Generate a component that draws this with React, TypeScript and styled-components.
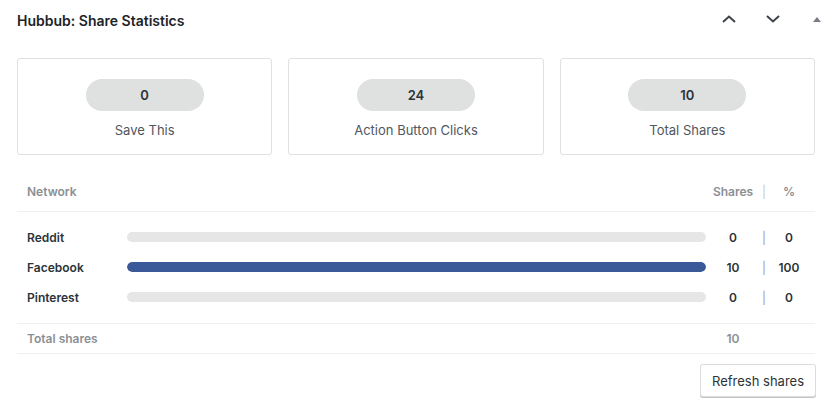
import styled, { createGlobalStyle } from 'styled-components';

const GlobalStyle = createGlobalStyle`
  html, body {
    margin: 0;
    background: #ffffff;
    font-family: Inter, "Noto Sans", "Liberation Sans", sans-serif;
    color: #1d2327;
  }
`;

interface Stat {
  value: number;
  label: string;
}

interface NetworkRow {
  name: string;
  shares: number;
  percent: number;
  color: string;
}

const stats: Stat[] = [
  { value: 0, label: 'Save This' },
  { value: 24, label: 'Action Button Clicks' },
  { value: 10, label: 'Total Shares' },
];

const networks: NetworkRow[] = [
  { name: 'Reddit', shares: 0, percent: 0, color: '#cb4a26' },
  { name: 'Facebook', shares: 10, percent: 100, color: '#3b5998' },
  { name: 'Pinterest', shares: 0, percent: 0, color: '#bd081c' },
];

export default function App() {
  const total = networks.reduce((sum, n) => sum + n.shares, 0);

  return (
    <>
      <GlobalStyle />
      <Panel>
        <Header>
          <Title>Hubbub: Share Statistics</Title>
          <Handles>
            <HandleButton aria-label="Move up">
              <svg width="14" height="8" viewBox="0 0 14 8">
                <path d="M1 7L7 1.5L13 7" fill="none" stroke="#3c434a" strokeWidth="2" />
              </svg>
            </HandleButton>
            <HandleButton aria-label="Move down">
              <svg width="14" height="8" viewBox="0 0 14 8">
                <path d="M1 1L7 6.5L13 1" fill="none" stroke="#3c434a" strokeWidth="2" />
              </svg>
            </HandleButton>
            <HandleButton aria-label="Toggle panel">
              <svg width="8" height="5" viewBox="0 0 8 5">
                <path d="M4 0L8 5H0Z" fill="#787c82" />
              </svg>
            </HandleButton>
          </Handles>
        </Header>

        <Body>
          <Cards>
            {stats.map((s) => (
              <Card key={s.label}>
                <Pill>{s.value}</Pill>
                <CardLabel>{s.label}</CardLabel>
              </Card>
            ))}
          </Cards>

          <Table>
            <HeadRow>
              <Wide>Network</Wide>
              <Cell>Shares</Cell>
              <Pipe $muted>|</Pipe>
              <Cell>%</Cell>
            </HeadRow>
            <Rows>
              {networks.map((n) => (
                <Row key={n.name}>
                  <Name>{n.name}</Name>
                  <Track>
                    <Fill style={{ width: `${n.percent}%`, background: n.color }} />
                  </Track>
                  <Cell>{n.shares}</Cell>
                  <Pipe>|</Pipe>
                  <Cell>{n.percent}</Cell>
                </Row>
              ))}
            </Rows>
            <FootRow>
              <Wide>Total shares</Wide>
              <Cell>{total}</Cell>
            </FootRow>
          </Table>

          <Actions>
            <Button>Refresh shares</Button>
          </Actions>
        </Body>
      </Panel>
    </>
  );
}

const Panel = styled.div`
  width: 839px;
  height: 418px;
  background: #ffffff;
`;

const Header = styled.div`
  display: flex;
  align-items: center;
  justify-content: space-between;
  height: 40px;
  padding-left: 17px;
`;

const Title = styled.h2`
  margin: 0;
  font-size: 14px;
  font-weight: 600;
  color: #1d2327;
`;

const Handles = styled.div`
  display: flex;
  align-items: center;
  margin-top: -2px;
`;

const HandleButton = styled.button`
  display: grid;
  place-content: center;
  width: 44px;
  height: 36px;
  padding: 0;
  border: 0;
  background: transparent;
`;

const Body = styled.div`
  padding: 18px 24px 0 17px;
`;

const Cards = styled.div`
  display: grid;
  grid-template-columns: repeat(3, 1fr);
  gap: 16px;
`;

const Card = styled.div`
  display: flex;
  flex-direction: column;
  align-items: center;
  padding: 20px 16px 15px;
  border: 1px solid #e0e0e0;
  border-radius: 3px;
`;

const Pill = styled.div`
  display: grid;
  place-content: center;
  width: 118px;
  height: 32px;
  margin-bottom: 10px;
  border-radius: 16px;
  background: #dfe0e0;
  font-size: 13px;
  font-weight: 600;
  color: #2c3338;
`;

const CardLabel = styled.div`
  font-size: 13px;
  line-height: 18px;
  color: #50575e;
`;

const Table = styled.div`
  margin-top: 16px;
`;

const gridColumns = `
  display: grid;
  grid-template-columns: 100px 1fr 54px 8px 42px;
  align-items: center;
  padding: 0 5px 0 10px;
`;

const HeadRow = styled.div`
  ${gridColumns}
  height: 40px;
  border-bottom: 1px solid #f0f0f1;
  font-size: 12px;
  font-weight: 600;
  color: #8c8f94;
`;

const Rows = styled.div`
  padding: 10px 0 11px;
  border-bottom: 1px solid #f0f0f1;
`;

const Row = styled.div`
  ${gridColumns}
  height: 30px;
  font-size: 12px;
  font-weight: 600;
  color: #2c3338;
`;

const FootRow = styled.div`
  ${gridColumns}
  height: 29px;
  border-bottom: 1px solid #f0f0f1;
  font-size: 12px;
  font-weight: 600;
  color: #8c8f94;
`;

const Wide = styled.div`
  grid-column: 1 / 3;
`;

const Name = styled.div``;

const Cell = styled.div`
  text-align: center;
`;

const Pipe = styled.div<{ $muted?: boolean }>`
  text-align: center;
  font-weight: 400;
  color: ${({ $muted }) => ($muted ? '#c8c8c8' : '#a0a0a0')};
`;

const Track = styled.div`
  height: 10px;
  border-radius: 5px;
  background: #e6e6e6;
  overflow: hidden;
`;

const Fill = styled.div`
  height: 100%;
  border-radius: 5px;
`;

const Actions = styled.div`
  display: flex;
  justify-content: flex-end;
  margin-top: 10px;
  margin-right: -1px;
`;

const Button = styled.button`
  height: 33px;
  padding: 0 11px;
  border: 1px solid #dcdcde;
  border-radius: 3px;
  background: #ffffff;
  box-shadow: 0 1px 0 #c3c4c7;
  font-family: inherit;
  font-size: 13px;
  color: #2c3338;
`;
